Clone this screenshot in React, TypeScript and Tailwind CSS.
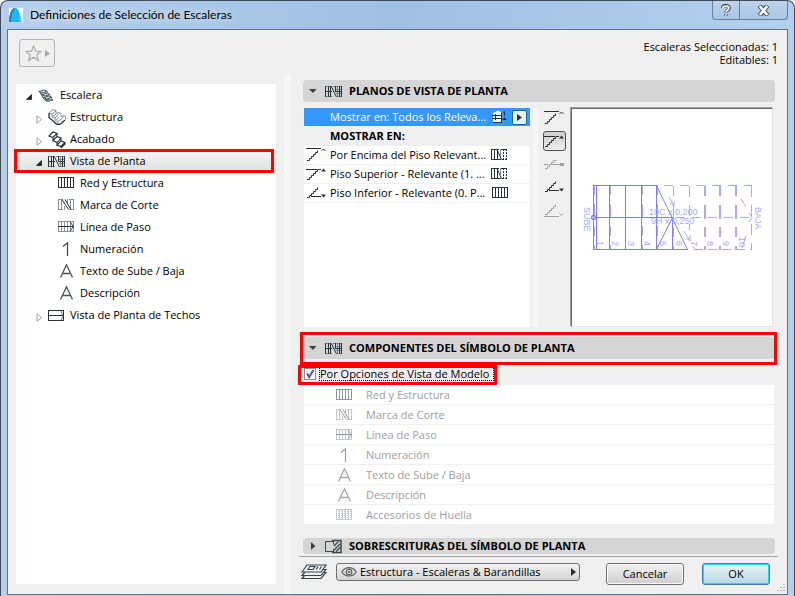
import React, { useState } from "react";
import clsx from "clsx";

type IconProps = { className?: string };

/* ─── Icons ─── */
function PlanIcon({ className }: IconProps) {
  return (
    <svg width="17" height="13" viewBox="0 0 17 13" className={className} fill="none" stroke="#263238" shapeRendering="crispEdges">
      <path d="M1 1.5h5M1 11.5h6M8 1.5h8M12 11.5h4M10 4.5h6M11 8.5h5" stroke="#7b858a" />
      <path d="M12.5 1v11" stroke="#7b858a" />
      <path d="M.5 1v11M3.5 1v11M1 6.5h6M10.5 1v6M14.5 1v11M11 6.5h5M16.5 1v11" />
      <path d="M5.500 1v11M6 1l5.500 11" shapeRendering="auto" />
    </svg>
  );
}

function GridIcon({ className }: IconProps) {
  return (
    <svg width="16" height="12" viewBox="0 0 16 12" className={className} fill="none" stroke="#263238" shapeRendering="crispEdges">
      <path d="M.5 .5h15v10h-15zM3.5 0v11M6.5 0v11M9.5 0v11M12.5 0v11" />
    </svg>
  );
}

function CutIcon({ className }: IconProps) {
  return (
    <svg width="16" height="12" viewBox="0 0 16 12" className={className} fill="none" stroke="#8a9196" shapeRendering="crispEdges">
      <path d="M0 .5h5M11 .5h5M0 10.5h5M11 10.5h5M.5 0v11M3.5 0v11M12.5 0v11M15.5 0v11M9.5 0v4M6.5 7v4" />
      <path d="M4 .5L10.5 10.5M7 .5L13 10.5" stroke="#263238" shapeRendering="auto" />
    </svg>
  );
}

function WalkIcon({ className }: IconProps) {
  return (
    <svg width="16" height="12" viewBox="0 0 16 12" className={className} fill="none" stroke="#8a9196" shapeRendering="crispEdges">
      <path d="M.5 .5h15v10h-15zM3.5 0v11M6.5 0v11M9.5 0v11M12.5 0v11" />
      <path d="M0 5.5h15" stroke="#263238" />
      <path d="M12 1l3.5 4.5L12 10" stroke="#263238" shapeRendering="auto" />
    </svg>
  );
}

function AccessoryIcon({ className }: IconProps) {
  return (
    <svg width="16" height="12" viewBox="0 0 16 12" className={className} fill="none" stroke="#8a9196" shapeRendering="crispEdges">
      <path d="M.5 .5h15v10h-15zM3.5 0v11M6.5 0v11M9.5 0v11M12.5 0v11" />
      <path d="M2 2.500h13M2 4.500h13M2 6.500h13M2 8.500h13" strokeDasharray="1 2" />
    </svg>
  );
}

function OneIcon({ className }: IconProps) {
  return (
    <svg width="16" height="14" viewBox="0 0 16 14" className={className} fill="none" stroke="#37474f">
      <path d="M5 4.5L9.5 .8V14" strokeWidth="1.2" />
    </svg>
  );
}

function LetterIcon({ className }: IconProps) {
  return (
    <svg width="16" height="14" viewBox="0 0 16 14" className={className} fill="none" stroke="#4a565c">
      <path d="M2.5 13.5L8.5 .8l6 12.7M4.5 9.5h8" strokeWidth="1.3" />
    </svg>
  );
}

function StairIcon({ className }: IconProps) {
  return (
    <svg width="16" height="13" viewBox="0 0 16 13" className={className} fill="#dfe2e4" stroke="#37474f">
      <path d="M.7 2.500c2 .3 4-1.700 6-1.200l3 1.500c-2-.5-4 1.500-6 1.200z" />
      <path d="M3.700 5.500c2 .3 4-1.700 6-1.200l2.500 1.500c-2-.5-4 1.500-6 1.200z" />
      <path d="M5.700 8.300c2 .3 4-1.700 6-1.200l2.500 1.500c-2-.5-4 1.500-6 1.200z" />
      <path d="M7.500 11c2 .3 3.500-1.200 5.300-.9l2.200 1c-2-.3-3 1.200-5 1z" />
      <path d="M2.500 4l1.500 3 2 3 3 2.500" fill="none" />
    </svg>
  );
}

function StructureIcon({ className }: IconProps) {
  return (
    <svg width="18" height="16" viewBox="0 0 18 16" className={className} fill="none" stroke="#8a9196">
      <path d="M1 4l4-3.500 3 1v3l3-1 2 1v3l3-1 1.500 1v3" />
      <path d="M1 4l3 1 4-3M4 5v3l4-3M4 8l3 1 4-4.500M7 9v2.500l4-3M7 11.500l3 1 6-5M10 12.500v3" />
      <path d="M1 4v4.500l8 7 3 0 5-4.500" stroke="#263238" strokeWidth="1.300" />
    </svg>
  );
}

function FinishIcon({ className }: IconProps) {
  return (
    <svg width="18" height="17" viewBox="0 0 18 17" className={className} fill="none" stroke="#263238" strokeWidth="1.100">
      <path d="M1 5l4-4 4 1.500-4 4zM5 6.500v3l4-4v-3M5 9.500l4-4 4 1.500-4 4.500zM9 11.500v2.500l4-4V7M9 14l4-4 4 1.500-4 4zM13 15.500V17l4-4v-1.500" />
    </svg>
  );
}

function RoofIcon({ className }: IconProps) {
  return (
    <svg width="17" height="13" viewBox="0 0 17 13" className={className} fill="none" stroke="#263238" shapeRendering="crispEdges">
      <path d="M.5 1.500h15v10H.5zM0 6.500h15" />
      <path d="M13 2l2 4.500-2 5" stroke="#6b7479" shapeRendering="auto" />
    </svg>
  );
}

function OverrideIcon({ className }: IconProps) {
  return (
    <svg width="17" height="15" viewBox="0 0 17 15" className={className} fill="none" stroke="#37474f">
      <path d="M8 2.500H.5v10H8" />
      <path d="M7 1.500h9v12H7" strokeWidth="1.500" />
      <path d="M9 7l4.500-4.500M9 11l6-6M11 12.500l4.500-4.500" strokeWidth="1.200" />
      <path d="M8.500 1.500v4M8.500 10v3" />
    </svg>
  );
}

function PartialIcon({ className }: IconProps) {
  return (
    <svg width="17" height="12" viewBox="0 0 17 12" className={className} fill="none" stroke="#263238" shapeRendering="crispEdges">
      <path d="M0 .5h8M0 10.500h10M.5 0v11M3.500 0v11M6.500 0v11" />
      <path d="M6 .5l4.500 10" shapeRendering="auto" />
      <path d="M9.500 0v7" stroke="#8a9196" />
      <path d="M12.500 0v11M15.500 0v11M10 .5h6M11 10.500h5" strokeDasharray="2 1" />
    </svg>
  );
}

type FlightKind = "above" | "upper" | "middle" | "lower" | "below";

function FlightIcon({ kind, className }: { kind: FlightKind; className?: string }) {
  const top = kind === "above" || kind === "upper";
  return (
    <svg width="21" height="14" viewBox="0 0 21 14" className={className} fill="none" stroke="#263238" shapeRendering="crispEdges">
      {top && <path d="M1 12.500h2.500v-2h2v-2h2v-2h2v-2h2v-2" shapeRendering="auto" />}
      {kind === "above" && (
        <>
          <path d="M0 .5h15" />
          <path d="M15.500 3l2-2 2 2" shapeRendering="auto" />
        </>
      )}
      {kind === "upper" && (
        <>
          <path d="M0 2.500h11M12 2.500h3" />
          <path d="M15 4.500l2.500-3 2.500 3z" fill="#263238" stroke="none" shapeRendering="auto" />
        </>
      )}
      {kind === "middle" && (
        <>
          <path d="M1 11.500h2.500v-2h2v-2h2v-2h2v-2h3" shapeRendering="auto" />
          <path d="M0 7.500h4M8 7.500h8" />
          <circle cx="18" cy="7.500" r="2" fill="#263238" stroke="none" />
        </>
      )}
      {(kind === "lower" || kind === "below") && (
        <path d="M1 11.500h2.500v-2h2v-2h2v-2h2v-2h2v-2" shapeRendering="auto" />
      )}
      {kind === "lower" && (
        <>
          <path d="M5 10.500h10" />
          <path d="M15 8.500h5l-2.500 3z" fill="#263238" stroke="none" shapeRendering="auto" />
        </>
      )}
      {kind === "below" && (
        <>
          <path d="M0 13.500h15" />
          <path d="M15.500 10.500l2 2 2-2" shapeRendering="auto" />
        </>
      )}
    </svg>
  );
}

function StoryIcon() {
  return (
    <svg width="16" height="14" viewBox="0 0 16 14" fill="none">
      <path d="M1 3l5-2.500L9 2v11H1z" fill="#f4f8fc" />
      <path d="M0 5.500h9M0 8.500h9M1 12.500h8M3.500 4v6M9.500 3v10" stroke="#263238" shapeRendering="crispEdges" />
      <path d="M11 2.500l1.500-1V6" stroke="#17395c" />
      <path d="M10 10h5l-2.500-3z" fill="#17395c" />
    </svg>
  );
}

function LayersIcon() {
  return (
    <svg width="26" height="16" viewBox="0 0 26 16" fill="#f0f0f0" stroke="#37474f" strokeWidth="1.200">
      <path d="M1 14.500l5-6h19l-5 6z" />
      <path d="M1 11.500l5-6h19l-5 6z" />
      <path d="M1 8l5-7h19l-5 7z" />
      <path d="M7 5.500l2-3h5l-2 3zM15 5.500l2-3M18.500 5.500l2-3" />
    </svg>
  );
}

/* Disclosure arrow of the tree */
function Twisty({ open }: { open: boolean }) {
  return (
    <svg width="8" height="9" viewBox="0 0 8 9" className="mt-1 shrink-0">
      {open ? (
        <path d="M6.500 1.500v5H1.500z" fill="#262626" stroke="#262626" strokeWidth=".8" />
      ) : (
        <path d="M2 .8v7.400l4.500-3.700z" fill="#fff" stroke="#a0a0a0" />
      )}
    </svg>
  );
}

/* ─── Tree ─── */
type TreeItem = {
  label: string;
  level: number;
  open?: boolean;
  selected?: boolean;
  icon: React.ComponentType<IconProps>;
};

const treeItems: TreeItem[] = [
  { label: "Escalera", level: 0, open: true, icon: StairIcon },
  { label: "Estructura", level: 1, open: false, icon: StructureIcon },
  { label: "Acabado", level: 1, open: false, icon: FinishIcon },
  { label: "Vista de Planta", level: 1, open: true, selected: true, icon: PlanIcon },
  { label: "Red y Estructura", level: 2, icon: GridIcon },
  { label: "Marca de Corte", level: 2, icon: CutIcon },
  { label: "Línea de Paso", level: 2, icon: WalkIcon },
  { label: "Numeración", level: 2, icon: OneIcon },
  { label: "Texto de Sube / Baja", level: 2, icon: LetterIcon },
  { label: "Descripción", level: 2, icon: LetterIcon },
  { label: "Vista de Planta de Techos", level: 1, open: false, icon: RoofIcon },
];

const indents = ["pl-2", "pl-[18px]", "pl-7"];

function Tree() {
  return (
    <ul className="flex-1 bg-white">
      {treeItems.map((item) => {
        const Icon = item.icon;
        return (
          <li key={item.label} className="relative">
            <button
              type="button"
              className={clsx(
                "flex h-[22px] w-full items-center text-left",
                indents[item.level],
                item.selected && "bg-linear-to-b from-[#f6f6f6] to-[#e0e0e0]"
              )}
            >
              <span className="flex w-3 pl-px">{item.open !== undefined && <Twisty open={item.open} />}</span>
              <span className="flex w-6 pl-0.5">
                <Icon />
              </span>
              <span className="whitespace-nowrap">{item.label}</span>
            </button>
            {item.selected && (
              <span className="pointer-events-none absolute -inset-y-px -left-0.5 right-0.5 border-3 border-[#f00]" />
            )}
          </li>
        );
      })}
    </ul>
  );
}

/* ─── Collapsible section header ─── */
function SectionHeader({
  title,
  open = true,
  icon: Icon,
  className,
}: {
  title: string;
  open?: boolean;
  icon: React.ComponentType<IconProps>;
  className?: string;
}) {
  return (
    <h2 className={clsx("overflow-hidden rounded-sm bg-[#d5d5d5]", className)}>
      <button type="button" className="flex h-full w-full items-center pl-1.5 font-bold">
        <svg width="8" height="8" viewBox="0 0 8 8" fill="#404040">
          {open ? <path d="M0 2h7.500L4 6z" /> : <path d="M2 0v8l4.500-4z" />}
        </svg>
        <span className="flex w-8 justify-center">
          <Icon />
        </span>
        <span className="whitespace-nowrap">{title}</span>
      </button>
    </h2>
  );
}

const floorRows: { label: string; kind: FlightKind; icon: React.ComponentType<IconProps> }[] = [
  { label: "Por Encima del Piso Relevant...", kind: "above", icon: PartialIcon },
  { label: "Piso Superior - Relevante (1. ...", kind: "upper", icon: PartialIcon },
  { label: "Piso Inferior - Relevante (0. P...", kind: "lower", icon: GridIcon },
];

const flights: { kind: FlightKind; label: string; disabled?: boolean }[] = [
  { kind: "above", label: "Por encima" },
  { kind: "upper", label: "Piso superior" },
  { kind: "middle", label: "Piso intermedio", disabled: true },
  { kind: "lower", label: "Piso inferior" },
  { kind: "below", label: "Por debajo", disabled: true },
];

const components: { label: string; icon: React.ComponentType<IconProps> }[] = [
  { label: "Red y Estructura", icon: GridIcon },
  { label: "Marca de Corte", icon: CutIcon },
  { label: "Línea de Paso", icon: WalkIcon },
  { label: "Numeración", icon: OneIcon },
  { label: "Texto de Sube / Baja", icon: LetterIcon },
  { label: "Descripción", icon: LetterIcon },
  { label: "Accesorios de Huella", icon: AccessoryIcon },
];

const treadNumbers = [
  { n: "1", x: 25 },
  { n: "2", x: 40 },
  { n: "3", x: 56 },
  { n: "4", x: 72 },
  { n: "5", x: 88 },
  { n: "6", x: 104 },
  { n: "7", x: 119 },
  { n: "8", x: 135 },
  { n: "9", x: 151 },
  { n: "10", x: 167 },
];

/* ─── 2D stair preview ─── */
function StairPreview() {
  return (
    <svg width="200" height="216" viewBox="0 0 200 216" className="shrink-0" fill="none" stroke="#7f7ff8">
      <g shapeRendering="crispEdges">
        <g stroke="#a9a9ff">
          <path d="M92 76.500h88" strokeDasharray="9 7" />
          <path d="M122 140.500h58" strokeDasharray="9 5" />
          <path d="M104 108.500h76" strokeDasharray="9 7" />
          <path d="M117.500 77v44M179.500 77v64" strokeDasharray="11 8" />
          <path d="M133 77v64M148 77v64M164 77v64" strokeWidth="2" strokeDasharray="10 9 14 8" />
          <path d="M101.500 77v64M22.500 76v64M38.500 76v64M70.500 76v64M85.500 76v64" strokeDasharray="10 9 14 8" />
        </g>
        <path d="M84.500 76.500h-63v64h94M21.500 108.500h79M24.500 76v64M37.500 76v64M53.500 76v64M69.500 76v64M84.500 76v64M100.500 108v32" />
      </g>
      <path d="M84.500 76.500l31 64M100.500 108.500l-16 32" />
      <path
        d="M97 88l5 9v-5M101 96l-3-2M112 122l6 10M118 132v-6M118 132l-4-3M121 137l2 4M169 90l5 8M174 127l-4 12M177 104l3 4.500-3 4.500"
        stroke="#a9a9ff"
      />
      <circle cx="21.500" cy="108.500" r="2.300" fill="#a9a9ff" />
      <g fill="#a9a9f8" stroke="none" className="font-['Liberation_Sans',sans-serif] text-[9px]">
        <text x="77" y="106">10C x 0,200</text>
        <text x="79" y="115">9H x 0,250</text>
        <text transform="translate(12 98) rotate(90)">SUBE</text>
        <text transform="translate(183 98) rotate(90)">BAJA</text>
        {treadNumbers.map(({ n, x }) => (
          <text key={n} transform={`translate(${x} ${n === "10" ? 128 : 132}) rotate(90)`}>
            {n}
          </text>
        ))}
      </g>
    </svg>
  );
}

/* ─── Title bar ─── */
function TitleBar() {
  return (
    <header className="flex h-7 shrink-0 items-start justify-between">
      <div className="flex h-full items-center gap-1.5 pl-px">
        <svg width="16" height="16" viewBox="0 0 16 16">
          <rect x=".5" y=".5" width="15" height="15" fill="#f6fafd" stroke="#c3d3e2" />
          <path d="M1 15C1 9 3 1 7 1c4 0 6 7 7 14h-2C11 8 9 3 7.500 3 6 5 5.500 10 5.500 15z" fill="#5cc9f0" />
          <path d="M1 15C1 9 3 1 7 1c2.500 0 3.500 3 4 6l1 8H5z" fill="#1fb6e9" />
          <path d="M1 15C1 9 3 1 7 1 4 4 3 9 3 15z" fill="#0a86c2" />
        </svg>
        <h1 className="font-['Lato','Open_Sans',sans-serif] text-[12px] whitespace-nowrap [text-shadow:0_0_8px_#fff]">
          Definiciones de Selección de Escaleras
        </h1>
      </div>
      <div className="flex h-[19px] overflow-hidden rounded-b-sm border border-t-0 border-[#66809f] bg-linear-to-b from-[#bfd3ea] to-[#a9c5e4]">
        <button type="button" aria-label="Ayuda" className="flex w-[27px] items-center justify-center border-r border-[#66809f]">
          <svg width="10" height="13" viewBox="0 0 10 13" fill="none" strokeLinejoin="round">
            <path d="M1.500 4C1.500 .8 8.300 .8 8.300 4 8.300 6 5 6 5 8.500M5 10.300v1.700" stroke="#3f4a60" strokeWidth="3.400" />
            <path d="M1.800 4C2 1.500 8 1.500 8 4 8 6 5 6 5 8.300M5 10.500v1.200" stroke="#fff" strokeWidth="1.700" />
          </svg>
        </button>
        <button type="button" aria-label="Cerrar" className="flex w-[47px] items-center justify-center">
          <svg width="13" height="11" viewBox="0 0 13 11">
            <path d="M2.500 .5l8 10M10.500 .5l-8 10" stroke="#3f4a60" strokeWidth="4.600" />
            <path d="M2.800 1.200l7.400 8.600M10.200 1.200l-7.400 8.600" stroke="#fff" strokeWidth="2.600" />
          </svg>
        </button>
      </div>
    </header>
  );
}

export default function App() {
  const [byModelView, setByModelView] = useState(true);
  const [activeFlight, setActiveFlight] = useState<FlightKind>("upper");

  return (
    <div className="flex min-h-screen flex-col overflow-hidden rounded-t-lg border border-b-0 border-[#3f4a5a] bg-linear-to-r from-[#b5cfeb] via-[#9fc0e5] to-[#b4d0ee] px-1.5 pb-px font-['Open_Sans','Noto_Sans',sans-serif] text-[11px] leading-4 text-black">
      <TitleBar />

      <main className="flex flex-1 border border-[#5d7390] bg-[#f0f0f0]">
        {/* Left column */}
        <aside className="flex w-[276px] shrink-0 flex-col px-2 pt-2 pb-2.5">
          <div className="h-[46px] pl-[3px]">
            <button
              type="button"
              aria-label="Favoritos"
              className="mt-px flex h-7 w-9 items-center justify-center gap-[3px] rounded-[3px] border border-[#b4b4b4]"
            >
              <svg width="17" height="17" viewBox="0 0 17 17" fill="none" stroke="#b0b0b0" strokeWidth="1.300">
                <path d="M8.500 1l2 5.200 5.500.3-4.300 3.500 1.500 5.500-4.700-3.200-4.700 3.200L5.300 10 1 6.500l5.500-.3z" />
              </svg>
              <svg width="5" height="7" viewBox="0 0 5 7" fill="#a8a8a8">
                <path d="M0 0v7l5-3.500z" />
              </svg>
            </button>
          </div>
          <Tree />
        </aside>

        <div className="mt-11 w-[7px] shrink-0 bg-[#f7f7f7]" />

        {/* Right column */}
        <div className="flex min-w-0 flex-1 flex-col">
          <div className="h-[50px] pt-2.5 pr-[9px] text-right leading-[13px]">
            <p>Escaleras Seleccionadas: 1</p>
            <p>Editables: 1</p>
          </div>

          <div className="flex flex-1 flex-col px-3">
            <SectionHeader title="PLANOS DE VISTA DE PLANTA" icon={PlanIcon} className="h-[22px]" />

            <div className="mt-1.5 mr-0.5 ml-px flex h-[219px]">
              <div className="flex min-w-0 flex-1 flex-col">
                <div className="flex h-[18px] items-center bg-[#3399ff] pr-[3px] pl-[26px] text-white">
                  <span className="flex-1 whitespace-nowrap">Mostrar en: Todos los Releva...</span>
                  <span className="flex items-center gap-1">
                    <StoryIcon />
                    <button
                      type="button"
                      aria-label="Elegir pisos"
                      className="flex h-[15px] w-[15px] items-center justify-center rounded-xs border border-[#2c628b] bg-[#e4f1fb]"
                    >
                      <svg width="5" height="7" viewBox="0 0 5 7" fill="#263238">
                        <path d="M0 0v7l5-3.500z" />
                      </svg>
                    </button>
                  </span>
                </div>
                <h3 className="h-5 pt-0.5 pl-[26px] font-bold">MOSTRAR EN:</h3>
                <ul className="flex-1 bg-white">
                  {floorRows.map(({ label, kind, icon: Icon }) => (
                    <li key={kind} className="flex h-[19px] items-center border-b border-[#f0f0f0] pr-[22px] pl-0.5">
                      <FlightIcon kind={kind} className="mr-[3px] shrink-0" />
                      <span className="flex-1 whitespace-nowrap">{label}</span>
                      <Icon className="shrink-0" />
                    </li>
                  ))}
                </ul>
              </div>

              <div className="ml-[3px] w-[5px] shrink-0 bg-[#f7f7f7]" />

              <div className="flex w-[33px] shrink-0 flex-col items-center gap-[3px]">
                {flights.map(({ kind, label, disabled }) => (
                  <button
                    key={kind}
                    type="button"
                    aria-label={label}
                    disabled={disabled}
                    onClick={() => setActiveFlight(kind)}
                    className={clsx(
                      "flex h-5 w-[23px] items-center justify-center rounded-[3px] border",
                      kind === activeFlight
                        ? "border-[#505050] bg-linear-to-b from-[#cfcfcf] to-[#ececec]"
                        : "border-transparent"
                    )}
                  >
                    <FlightIcon kind={kind} className={clsx("shrink-0", disabled && "opacity-40")} />
                  </button>
                ))}
              </div>

              <div className="flex w-[202px] shrink-0 justify-center overflow-hidden border border-t-[#696969] border-r-[#e3e3e3] border-b-[#e3e3e3] border-l-[#696969] bg-white shadow-[-1px_-1px_0_#a0a0a0]">
                <StairPreview />
              </div>
            </div>

            <div className="relative mt-2.5">
              <SectionHeader title="COMPONENTES DEL SÍMBOLO DE PLANTA" icon={PlanIcon} className="h-[22px]" />
              <span className="pointer-events-none absolute -top-[5px] -right-0.5 -bottom-1.5 -left-[3px] border-3 border-[#f00]" />
            </div>

            <div className="relative mt-1.5 flex h-5 self-start pl-px">
              <label className="flex items-center gap-[3px] pb-0.5">
                <span className="relative flex">
                  <input
                    type="checkbox"
                    checked={byModelView}
                    onChange={(e) => setByModelView(e.target.checked)}
                    className="h-3 w-3 appearance-none border border-[#8e8f8f] bg-[#f4f4f4] shadow-[inset_0_0_0_1px_#fff]"
                  />
                  {byModelView && (
                    <svg width="12" height="12" viewBox="0 0 12 12" fill="none" className="pointer-events-none absolute inset-0">
                      <path d="M3 5.500l2.200 3.500L9.500 2" stroke="#4a5da5" strokeWidth="2" />
                    </svg>
                  )}
                </span>
                <span className="border border-dotted border-black pr-1 leading-3 whitespace-nowrap">
                  Por Opciones de Vista de Modelo
                </span>
              </label>
              <span className="pointer-events-none absolute inset-y-0 -right-[3px] -left-[5px] border-3 border-[#f00]" />
            </div>

            <ul className="mr-px ml-px text-[#a0a0a0]">
              {components.map(({ label, icon: Icon }) => (
                <li key={label} className="flex h-5 items-center border-b border-[#f0f0f0] bg-white pl-8">
                  <Icon className="mr-3.5 opacity-50" />
                  {label}
                </li>
              ))}
            </ul>

            <SectionHeader title="SOBRESCRITURAS DEL SÍMBOLO DE PLANTA" open={false} icon={OverrideIcon} className="mt-[13px] h-4" />
          </div>

          {/* Footer */}
          <footer className="mr-[9px] ml-2 flex h-[38px] items-start border-t border-[#a0a0a0] pt-1.5 pr-2 pl-0.5">
            <div className="mt-px mr-[9px] shrink-0">
              <LayersIcon />
            </div>
            <div className="relative w-[244px]">
              <svg
                width="16"
                height="12"
                viewBox="0 0 16 12"
                fill="none"
                stroke="#606060"
                className="pointer-events-none absolute top-[3px] left-[5px]"
              >
                <path d="M.8 6C4 .2 12 .2 15.200 6 12 11.300 4 11.300 .8 6z" strokeWidth="1.200" />
                <circle cx="8" cy="6" r="2.800" strokeWidth="1.200" />
                <circle cx="8" cy="6" r=".8" fill="#606060" />
              </svg>
              <select
                aria-label="Capa"
                className="block h-[18px] w-full appearance-none rounded-[3px] border border-[#707070] bg-linear-to-b from-[#f2f2f2] to-[#d4d4d4] pl-[23px] leading-4"
              >
                <option>Estructura - Escaleras &amp; Barandillas</option>
              </select>
              <svg width="5" height="8" viewBox="0 0 5 8" fill="#303030" className="pointer-events-none absolute top-[5px] right-1">
                <path d="M0 0v8l5-4z" />
              </svg>
            </div>
            <div className="relative ml-auto flex gap-[18px]">
              <button
                type="button"
                className="h-[22px] w-[78px] rounded-[3px] border border-[#707070] bg-linear-to-b from-[#f2f2f2] to-[#cfcfcf] shadow-[inset_0_0_0_1px_#fafafa]"
              >
                Cancelar
              </button>
              <button
                type="button"
                className="h-[22px] w-[68px] rounded-[3px] border border-[#3c7fb1] bg-linear-to-b from-[#eaf4f8] to-[#b8d8e6] shadow-[inset_0_0_0_1px_#2fd0fb]"
              >
                OK
              </button>
              {/* Resize grip */}
              <svg width="8" height="8" viewBox="0 0 8 8" fill="#b8b8b8" className="pointer-events-none absolute top-[21px] -right-[15px]">
                <path d="M6 0h2v1H6zM3 3h2v1H3zM6 3h2v1H6zM0 6h2v1H0zM3 6h2v1H3zM6 6h2v1H6z" />
              </svg>
            </div>
          </footer>
        </div>
      </main>
    </div>
  );
}
